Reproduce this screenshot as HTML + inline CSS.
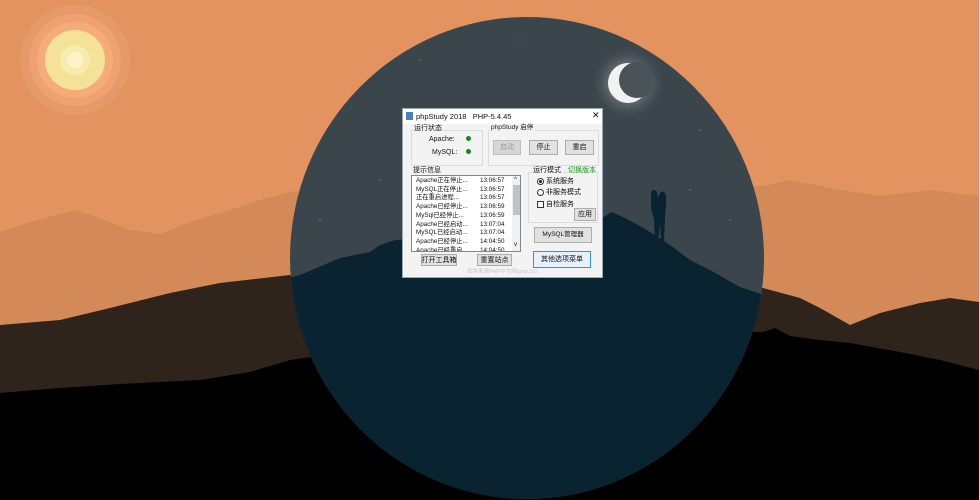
<!DOCTYPE html>
<html><head><meta charset="utf-8"><style>
*{margin:0;padding:0;box-sizing:border-box}
body{width:979px;height:500px;overflow:hidden;background:#e3935f;position:relative;font-family:"Liberation Sans","Noto Sans CJK SC",sans-serif}
.a{position:absolute}
#dlg{left:402px;top:108px;width:201px;height:170px;background:#f3f3f3;border:1px solid #9aa7b5;font-size:7px;color:#111;overflow:hidden}
#dlg .a{white-space:nowrap;line-height:1}
.grp{border:1px solid #dcdcdc}
.btn{background:#e1e1e1;border:1px solid #adadad;text-align:center;font-size:7px;display:flex;align-items:center;justify-content:center}
.row{position:absolute;left:4px;font-size:6.3px;white-space:nowrap}
.row span{position:absolute;left:64px}
</style></head><body>
<svg class="a" style="left:0;top:0" width="979" height="500">
<defs>
<clipPath id="c"><ellipse cx="527" cy="258" rx="237" ry="241"/></clipPath>
<radialGradient id="mg"><stop offset="0.35" stop-color="#7d858a"/><stop offset="1" stop-color="#3b464c" stop-opacity="0"/></radialGradient>
</defs>
<circle cx="75" cy="60" r="55" fill="#e69a69"/>
<circle cx="75" cy="60" r="46" fill="#eea271"/>
<circle cx="75" cy="60" r="38" fill="#f5ab7a"/>
<circle cx="75" cy="60" r="30" fill="#f3e297"/>
<circle cx="75" cy="60" r="15" fill="#f6ecae"/>
<circle cx="75" cy="60" r="8" fill="#faf4c8"/>
<polygon fill="#d48a58" points="0,232 30,222 75,210 100,218 130,230 160,234 190,222 230,210 260,200 290,192 500,180 763,186 790,180 830,188 880,196 930,190 979,196 979,500 0,500"/>
<polygon fill="#2f241c" points="0,325 60,320 110,308 170,293 220,283 290,275 500,260 763,288 800,298 820,308 850,325 880,313 920,303 950,298 979,302 979,500 0,500"/>
<polygon fill="#000" points="0,393 60,388 120,384 200,380 250,372 290,360 500,330 763,332 775,328 790,336 820,340 850,343 900,352 940,360 979,370 979,500 0,500"/>
<g clip-path="url(#c)">
<rect x="280" y="0" width="500" height="500" fill="#3b464c"/>
<circle cx="628" cy="83" r="38" fill="url(#mg)"/>
<circle cx="628" cy="83" r="20" fill="#f2f2f2"/>
<circle cx="637" cy="80" r="18" fill="#4a5357"/>
<polygon fill="#0a2331" points="280,280 300,275 340,258 370,252 380,245 395,240 420,238 500,240 560,235 590,225 612,212 625,218 640,226 655,235 670,245 690,260 710,270 740,287 770,297 780,300 780,500 280,500"/>
<path fill="#0a2331" d="M651,192 q3,-4 6,0 l1,6 q2,-8 6,-6 q3,2 2,12 l-1,14 l-1,24 h-3 l-1,-18 l-2,18 h-3 l-1,-22 l-3,-12 z"/>
<g fill="#8d969b"><circle cx="340" cy="100" r=".6"/><circle cx="420" cy="60" r=".6"/><circle cx="470" cy="140" r=".6"/><circle cx="520" cy="40" r=".6"/><circle cx="560" cy="110" r=".6"/><circle cx="700" cy="130" r=".6"/><circle cx="690" cy="190" r=".6"/><circle cx="380" cy="180" r=".6"/><circle cx="600" cy="160" r=".6"/><circle cx="730" cy="220" r=".6"/><circle cx="320" cy="220" r=".6"/></g>
</g>
</svg>
<div id="dlg" class="a">
 <div class="a" style="left:0;top:0;width:201px;height:15px;background:#fff"></div>
 <div class="a" style="left:3px;top:3px;width:7px;height:8px;background:#4a7fb8"></div>
 <div class="a" style="left:13px;top:4px;font-size:7.5px">phpStudy 2018&nbsp;&nbsp;&nbsp;PHP-5.4.45</div>
 <div class="a" style="left:189px;top:2px;font-size:9px">✕</div>
 <div class="a grp" style="left:8px;top:21px;width:72px;height:36px"></div>
 <div class="a" style="left:10px;top:16px;background:#f3f3f3;padding:0 1px">运行状态</div>
 <div class="a" style="left:26px;top:27px">Apache:</div>
 <div class="a" style="left:63px;top:27px;width:5px;height:5px;border-radius:50%;background:#118a1a"></div>
 <div class="a" style="left:29px;top:40px">MySQL:</div>
 <div class="a" style="left:63px;top:40px;width:5px;height:5px;border-radius:50%;background:#118a1a"></div>
 <div class="a grp" style="left:85px;top:21px;width:111px;height:36px"></div>
 <div class="a" style="left:87px;top:16px;background:#f3f3f3;padding:0 1px;font-size:6.5px">phpStudy 启停</div>
 <div class="a btn" style="left:90px;top:31px;width:28px;height:15px;color:#9a9a9a;background:#d6d6d6;border-color:#bfbfbf">启动</div>
 <div class="a btn" style="left:126px;top:31px;width:29px;height:15px">停止</div>
 <div class="a btn" style="left:162px;top:31px;width:29px;height:15px">重启</div>
 <div class="a" style="left:10px;top:58px">提示信息</div>
 <div class="a" style="left:8px;top:66px;width:110px;height:77px;background:#fff;border:1px solid #828790;overflow:hidden">
  <div class="row" style="top:2px">Apache正在停止...<span>13:06:57</span></div>
  <div class="row" style="top:10.7px">MySQL正在停止...<span>13:06:57</span></div>
  <div class="row" style="top:19.4px">正在重启进程...<span>13:06:57</span></div>
  <div class="row" style="top:28.1px">Apache已经停止...<span>13:06:59</span></div>
  <div class="row" style="top:36.8px">MySql已经停止...<span>13:06:59</span></div>
  <div class="row" style="top:45.5px">Apache已经启动...<span>13:07:04</span></div>
  <div class="row" style="top:54.2px">MySQL已经启动...<span>13:07:04</span></div>
  <div class="row" style="top:62.9px">Apache已经停止...<span>14:04:50</span></div>
  <div class="row" style="top:71.6px">Apache已经重启...<span>14:04:50</span></div>
  <div class="a" style="left:100px;top:0;width:9px;height:75px;background:#f0f0f0"></div>
  <div class="a" style="left:101px;top:9px;width:7px;height:30px;background:#c2c2c2"></div>
  <div class="a" style="left:102px;top:1px;font-size:6px">^</div>
  <div class="a" style="left:102px;top:66px;font-size:6px">v</div>
 </div>
 <div class="a btn" style="left:18px;top:145px;width:36px;height:12px">打开工具箱</div>
 <div class="a btn" style="left:74px;top:145px;width:35px;height:12px">重置站点</div>
 <div class="a grp" style="left:125px;top:63px;width:70px;height:51px"></div>
 <div class="a" style="left:129px;top:58px;background:#f3f3f3;padding:0 1px">运行模式</div>
 <div class="a" style="left:165px;top:58px;color:#1a9a1a">切换版本</div>
 <div class="a" style="left:134px;top:69px;width:7px;height:7px;border:1px solid #333;border-radius:50%;background:#fff"></div>
 <div class="a" style="left:136px;top:71px;width:3px;height:3px;border-radius:50%;background:#222"></div>
 <div class="a" style="left:143px;top:69px">系统服务</div>
 <div class="a" style="left:134px;top:80px;width:7px;height:7px;border:1px solid #333;border-radius:50%;background:#fff"></div>
 <div class="a" style="left:143px;top:80px">非服务模式</div>
 <div class="a" style="left:134px;top:92px;width:7px;height:7px;border:1px solid #333;background:#fff"></div>
 <div class="a" style="left:143px;top:92px">自检服务</div>
 <div class="a btn" style="left:171px;top:99px;width:22px;height:13px">应用</div>
 <div class="a btn" style="left:131px;top:118px;width:58px;height:16px;font-size:6.5px">MySQL管理器</div>
 <div class="a btn" style="left:130px;top:142px;width:58px;height:17px;border-color:#3c8fd8;background:#e5f1fb">其他选项菜单</div>
 <div class="a" style="left:64px;top:161px;color:#c6c6c6;font-size:5.5px">软件来源PHP中文网(php.cn)</div>
</div>
</body></html>
